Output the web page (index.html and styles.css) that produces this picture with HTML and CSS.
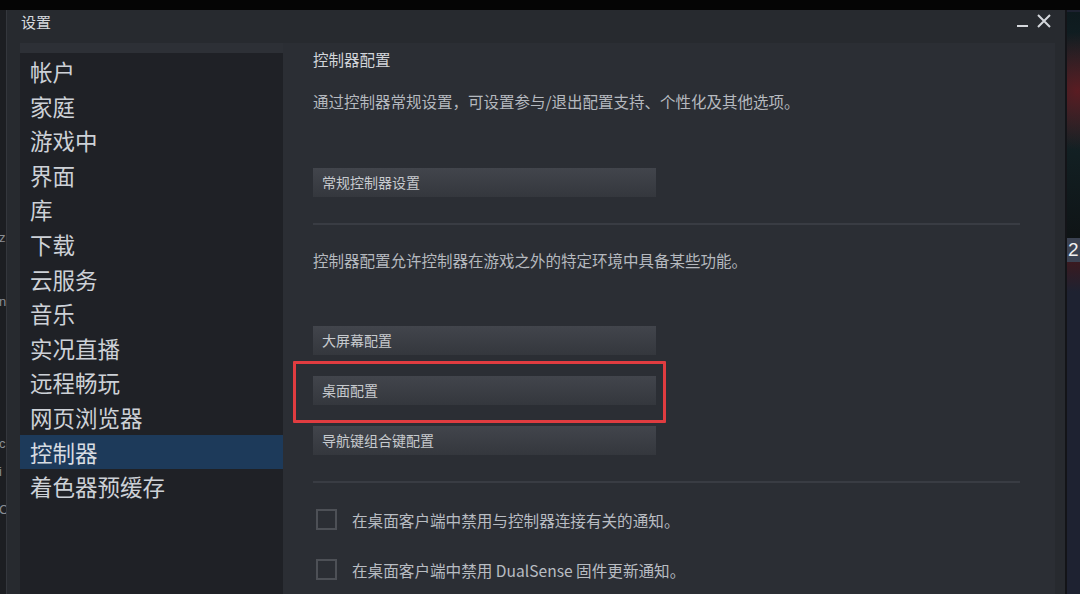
FILE: index.html
```html
<!DOCTYPE html>
<html lang="zh-CN">
<head>
<meta charset="utf-8">
<title>设置</title>
<link rel="stylesheet" href="styles.css">
</head>
<body>
<div class="topbar"></div>
<div class="desk">
  <div class="bgwin">
    <span class="g g1">z</span>
    <span class="g g2">n</span>
    <span class="g g3">c</span>
    <span class="g g4">i</span>
    <span class="g g5">C</span>
  </div>
  <div class="window">
    <div class="titlebar">
      <span class="title">设置</span>
      <div class="controls">
        <span class="min"></span>
        <svg class="close" width="16" height="16" viewBox="0 0 16 16"><path d="M2 2 L14 14 M14 2 L2 14" stroke="#d4d7dc" stroke-width="2" fill="none"/></svg>
      </div>
    </div>
    <div class="wbody">
      <nav class="sidebar">
        <div class="item">帐户</div>
        <div class="item">家庭</div>
        <div class="item">游戏中</div>
        <div class="item">界面</div>
        <div class="item">库</div>
        <div class="item">下载</div>
        <div class="item">云服务</div>
        <div class="item">音乐</div>
        <div class="item">实况直播</div>
        <div class="item">远程畅玩</div>
        <div class="item">网页浏览器</div>
        <div class="item active">控制器</div>
        <div class="item">着色器预缓存</div>
      </nav>
      <main class="content">
        <div class="heading">控制器配置</div>
        <div class="desc d1">通过控制器常规设置，可设置参与/退出配置支持、个性化及其他选项。</div>
        <div class="btn b1">常规控制器设置</div>
        <div class="sep s1"></div>
        <div class="desc d2">控制器配置允许控制器在游戏之外的特定环境中具备某些功能。</div>
        <div class="btn b2">大屏幕配置</div>
        <div class="btn b3 marked">桌面配置<span class="redbox"></span></div>
        <div class="btn b4">导航键组合键配置</div>
        <div class="sep s2"></div>
        <label class="check c1"><span class="box"></span><span class="ctext">在桌面客户端中禁用与控制器连接有关的通知。</span></label>
        <label class="check c2"><span class="box"></span><span class="ctext">在桌面客户端中禁用 DualSense 固件更新通知。</span></label>
      </main>
    </div>
  </div>
  <div class="game">
    <div class="art"></div>
    <div class="band">2</div>
    <div class="lower"></div>
  </div>
</div>
</body>
</html>
```
FILE: styles.css
```css
* { box-sizing: border-box; }
html, body { margin: 0; padding: 0; }
body {
  width: 1080px;
  height: 594px;
  overflow: hidden;
  background: #1b1d21;
  font-family: "Noto Sans CJK SC", "Noto Sans", sans-serif;
  color: #c9cdd3;
}
.topbar { height: 10px; background: #050505; }
.desk { display: flex; height: 584px; }

.bgwin {
  width: 7px;
  background: #1c1e22;
  border-right: 1px solid #34373d;
  position: relative;
  overflow: hidden;
  font-family: "Liberation Sans", sans-serif;
  font-size: 13px;
  color: #8a8e95;
}
.g { position: absolute; left: -1px; }
.g1 { top: 220px; }
.g2 { top: 284px; }
.g3 { top: 426px; }
.g4 { top: 454px; }
.g5 { top: 492px; }

.window {
  flex: 1;
  display: flex;
  flex-direction: column;
  background: #272a2f;
}
.titlebar {
  height: 33px;
  display: flex;
  justify-content: space-between;
  align-items: flex-start;
  padding: 2px 13px 0 14px;
}
.title { font-size: 15px; line-height: 20px; color: #d6d9de; }
.controls { display: flex; align-items: flex-end; gap: 8px; padding-top: 1px; }
.min { width: 11px; height: 2px; background: #d4d7dc; margin-bottom: 2px; }
.close { display: block; }

.wbody { flex: 1; display: flex; padding: 0 10px 0 13px; min-height: 0; }
.sidebar {
  width: 263px;
  padding-top: 11px;
  background: linear-gradient(#2d3036 0, #2d3036 10px, #1f2126 10px);
}
.item {
  height: 34.6px;
  line-height: 34.6px;
  padding-left: 10px;
  font-size: 22.5px;
  color: #cdd1d7;
  white-space: nowrap;
}
.item.active { background: #1d3a5a; color: #d7dce2; }

.content {
  flex: 1;
  background: #2b2e34;
  padding: 6px 35px 0 30px;
  display: flex;
  flex-direction: column;
  align-items: flex-start;
}
.heading { font-size: 15.5px; line-height: 20px; color: #d2d5da; }
.desc { font-size: 15.5px; line-height: 20px; color: #b5b9bf; white-space: nowrap; }
.d1 { margin-top: 22px; }
.d2 { margin-top: 25px; }

.btn {
  position: relative;
  width: 343px;
  height: 29px;
  line-height: 29px;
  padding-left: 9px;
  font-size: 14px;
  color: #c7cace;
  background: linear-gradient(#42454c, #34373d);
}
.b1 { margin-top: 57px; }
.b2 { margin-top: 56px; }
.b3 { margin-top: 21px; }
.b4 { margin-top: 21px; }
.redbox {
  position: absolute;
  left: -20px;
  top: -15px;
  width: 373px;
  height: 62px;
  border: 3px solid #e03c40;
  border-radius: 1px;
  pointer-events: none;
}

.sep { align-self: stretch; height: 2px; background: #393c43; }
.s1 { margin-top: 26px; }
.s2 { margin-top: 26px; }

.check { display: flex; align-items: center; gap: 15px; height: 21px; padding-left: 3px; }
.c1 { margin-top: 26px; }
.c2 { margin-top: 29px; }
.box { width: 21px; height: 21px; border: 2px solid #4d5056; background: #2b2e34; }
.ctext { font-size: 15.6px; color: #b8bcc2; white-space: nowrap; }

.game {
  width: 15px;
  display: flex;
  flex-direction: column;
  border-left: 2px solid #131418;
  background: #1d2130;
}
.art {
  height: 226px;
  margin-top: 2px;
  background:
    radial-gradient(circle at 80% 35%, #5a1c22 0, rgba(90,28,34,0) 40%),
    linear-gradient(#0e1a1e, #14262a 40%, #0f1416);
}
.band {
  height: 24px;
  background: #3b4252;
  color: #f0f0f0;
  font-family: "Liberation Sans", sans-serif;
  font-size: 19px;
  line-height: 24px;
  padding-left: 1px;
}
.lower {
  flex: 1;
  background: linear-gradient(#3a1a20 0, #1e2231 30px, #1e2231);
}
```
